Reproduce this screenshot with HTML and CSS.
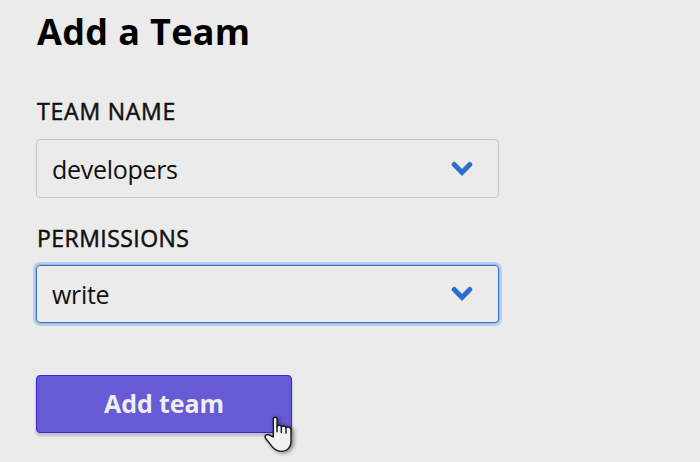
FILE: index.html
```html
<!DOCTYPE html>
<html lang="en">
<head>
<meta charset="utf-8">
<title>Add a Team</title>
<link rel="stylesheet" href="styles.css">
</head>
<body>
<form class="team-form">
  <h1>Add a Team</h1>
  <div class="label team-label">TEAM NAME</div>
  <div class="select"><span class="value">developers</span>
    <svg class="chevron" viewBox="0 0 22 16"><path d="M3.200 3.500 11 11.500 18.800 3.500"/></svg></div>
  <div class="label perm-label">PERMISSIONS</div>
  <div class="select focused"><span class="value">write</span>
    <svg class="chevron" viewBox="0 0 22 16"><path d="M3.200 3.500 11 11.500 18.800 3.500"/></svg></div>
  <button type="button" class="submit">Add team</button>
</form>
<svg class="cursor" viewBox="60 150 120 120"><path d="M97 216V162C97 155 108 155 108 162V184C111 179 120 180 121 186C125 181 134 182 135 188C140 184 150 187 150 194V230C150 247 139 259 120 259C104 259 96 250 88 238L73 219C69 210 80 206 87 211Z"/><path d="M108 182V202M121 186V204M135 188V206"/></svg>
</body>
</html>
```

FILE: styles.css
```css
* { box-sizing: border-box; }
body { margin: 0; width: 700px; height: 462px; overflow: hidden; background: #ebebeb; color: #111; font-family: "Open Sans", "Noto Sans", sans-serif; }
.team-form { width: 463px; margin-left: 36px; padding-top: 8px; }
h1 { margin: 0 0 0 1px; height: 47px; font-size: 36px; line-height: 47px; font-weight: 700; letter-spacing: .35px; color: #000; }
.label { margin-left: 1px; font-size: 23px; line-height: 30px; font-weight: 500; letter-spacing: .45px; -webkit-text-stroke: .5px #111; }
.team-label { margin-top: 41px; height: 43px; letter-spacing: .8px; }
.perm-label { margin-top: 25px; height: 42px; }
.select { height: 59px; border: 1px solid #c6c6c6; border-radius: 4px; display: flex; align-items: center; justify-content: space-between; padding: 0 25px 0 15px; }
.focused { border: 1px solid #3a73d2; box-shadow: 0 0 0 1px #9cb8e3, 0 0 0 3px #bfcde6; height: 58px; }
.value { font-size: 25px; letter-spacing: -.3px; }
.chevron { width: 22px; height: 16px; fill: none; stroke: #2d6cd0; stroke-width: 5; stroke-linecap: round; }
.submit { display: block; width: 256px; height: 58px; margin-top: 52px; padding: 0 6px 2px; border: 1px solid #3f24d4; border-radius: 4px; background: #675ad5; color: #eee; font: 700 25px "Open Sans", sans-serif; letter-spacing: -.1px; box-shadow: 0 3px 3px #bdbdbd; }
.cursor { position: absolute; left: 261px; top: 415px; width: 40px; height: 40px; fill: #f1f1f1; stroke: #17171f; stroke-width: 4.200; stroke-linejoin: round; filter: drop-shadow(2px 1px 2px #0007); }
```
